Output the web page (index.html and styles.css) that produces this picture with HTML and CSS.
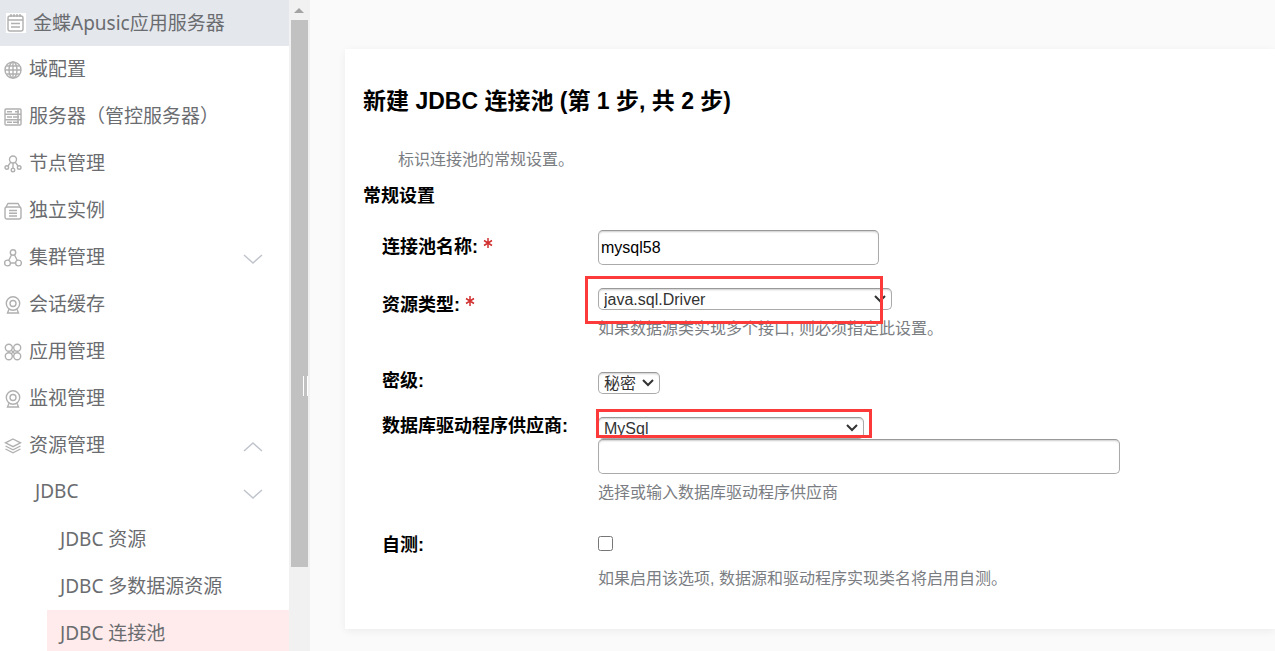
FILE: index.html
```html
<!DOCTYPE html>
<html lang="zh-CN">
<head>
  <meta charset="UTF-8">
  <meta name="viewport" content="width=device-width, initial-scale=1.0">
  <title>新建 JDBC 连接池</title>
  <link rel="stylesheet" href="styles.css">
</head>
<body>
  <aside class="sidebar">
    <nav class="menu">
      <a class="item root" href="#">
        <svg class="icon" viewBox="0 0 20 20"><rect x="2" y="3" width="15" height="15" rx="2"/><path d="M2 7h15M5 1v3M8 1v3M11 1v3M14 1v3M5 10.500h9M5 14h9"/></svg>
        <span>金蝶Apusic应用服务器</span>
      </a>
      <a class="item" href="#">
        <svg class="icon" viewBox="0 0 18 18"><circle cx="9" cy="9" r="8"/><ellipse cx="9" cy="9" rx="4" ry="8"/><path d="M9 1v16M1 9h16M2.500 5h13M2.500 13h13"/></svg>
        <span>域配置</span>
      </a>
      <a class="item" href="#">
        <svg class="icon" viewBox="0 0 18 18"><rect x="1" y="1" width="16" height="16" rx="1"/><path d="M1 6.300h16M1 11.700h16M3 3.700h5M3 9h5M3 14.300h5M11 3.700h4M9 9h6M9 14.300h6M14 2v14"/></svg>
        <span>服务器（管控服务器）</span>
      </a>
      <a class="item" href="#">
        <svg class="icon" viewBox="0 0 18 18"><circle cx="9" cy="4.500" r="3.500"/><circle cx="2.800" cy="12.500" r="1.800"/><circle cx="9" cy="15" r="1.800"/><circle cx="15.200" cy="12.500" r="1.800"/><path d="M9 8v5M6.800 7.200L4 11M11.200 7.200L14 11"/></svg>
        <span>节点管理</span>
      </a>
      <a class="item" href="#">
        <svg class="icon" viewBox="0 0 18 18"><rect x="1" y="5" width="16" height="12" rx="2"/><path d="M2 5l2-3.500h10L16 5M5 8.500h8M5 11.200h8M5 14h8"/></svg>
        <span>独立实例</span>
      </a>
      <a class="item" href="#">
        <svg class="icon" viewBox="0 0 18 18"><circle cx="9" cy="3.500" r="2.700"/><circle cx="3.500" cy="14" r="2.900"/><circle cx="14.500" cy="14" r="2.900"/><path d="M7.500 6L4.800 11.200M10.500 6l2.700 5.200M6.400 14h5.200"/></svg>
        <span>集群管理</span>
        <svg class="arrow" viewBox="0 0 20 12"><path d="M1 2l9 8 9-8"/></svg>
      </a>
      <a class="item" href="#">
        <svg class="icon" viewBox="0 0 18 18"><circle cx="9" cy="7.500" r="6.700"/><circle cx="9" cy="7.500" r="3"/><path d="M5 13.200L3.500 17h11L13 13.200"/></svg>
        <span>会话缓存</span>
      </a>
      <a class="item" href="#">
        <svg class="icon" viewBox="0 0 18 18"><circle cx="4.800" cy="4.800" r="3.500"/><circle cx="13.200" cy="4.800" r="3.500"/><circle cx="4.800" cy="13.200" r="3.500"/><circle cx="13.200" cy="13.200" r="3.500"/><path d="M7 7l4 4M11 7l-4 4"/></svg>
        <span>应用管理</span>
      </a>
      <a class="item" href="#">
        <svg class="icon" viewBox="0 0 18 18"><circle cx="9" cy="7.500" r="6.700"/><circle cx="9" cy="7.500" r="3"/><path d="M5 13.200L3.500 17h11L13 13.200"/></svg>
        <span>监视管理</span>
      </a>
      <a class="item" href="#">
        <svg class="icon" viewBox="0 0 18 18"><path d="M9 2l7.500 3.800L9 9.600 1.500 5.800zM1.500 9L9 12.800 16.500 9M1.500 12L9 15.800 16.500 12"/></svg>
        <span>资源管理</span>
        <svg class="arrow" viewBox="0 0 20 12"><path d="M1 10l9-8 9 8"/></svg>
      </a>
      <a class="item level2" href="#">
        <span>JDBC</span>
        <svg class="arrow" viewBox="0 0 20 12"><path d="M1 2l9 8 9-8"/></svg>
      </a>
      <a class="item level3" href="#"><span>JDBC 资源</span></a>
      <a class="item level3" href="#"><span>JDBC 多数据源资源</span></a>
      <a class="item level3 active" href="#"><span>JDBC 连接池</span></a>
    </nav>
    <div class="scrollbar">
      <svg class="scroll-up" viewBox="0 0 10 6"><path d="M0 6l5-5 5 5z"/></svg>
      <div class="thumb"></div>
      <div class="splitter"></div>
    </div>
  </aside>

  <main>
    <form class="card">
      <h1>新建 JDBC 连接池 (第 1 步, 共 2 步)</h1>
      <p class="intro">标识连接池的常规设置。</p>
      <h2>常规设置</h2>

      <div class="row">
        <label class="required" for="poolName">连接池名称: <svg class="star" viewBox="0 0 10 10"><path d="M5 0v10M1 2.500l8 5M9 2.500l-8 5"/></svg></label>
        <div class="field">
          <input type="text" class="text" id="poolName" value="mysql58">
        </div>
      </div>

      <div class="row">
        <label class="required" for="resType">资源类型: <svg class="star" viewBox="0 0 10 10"><path d="M5 0v10M1 2.500l8 5M9 2.500l-8 5"/></svg></label>
        <div class="field">
          <select class="type" id="resType"><option>java.sql.Driver</option></select>
          <p class="help">如果数据源类实现多个接口, 则必须指定此设置。</p>
          <div class="mark mark-type"></div>
        </div>
      </div>

      <div class="row">
        <label for="secret">密级:</label>
        <div class="field">
          <select class="secret" id="secret"><option>秘密</option></select>
        </div>
      </div>

      <div class="row">
        <label for="vendor">数据库驱动程序供应商:</label>
        <div class="field">
          <select class="vendor" id="vendor"><option>MySql</option></select>
          <input type="text" class="text wide" aria-label="数据库驱动程序供应商">
          <p class="help">选择或输入数据库驱动程序供应商</p>
          <div class="mark mark-vendor"></div>
        </div>
      </div>

      <div class="row">
        <label for="introspect">自测:</label>
        <div class="field">
          <div class="check"><input type="checkbox" id="introspect"></div>
          <p class="help">如果启用该选项, 数据源和驱动程序实现类名将启用自测。</p>
        </div>
      </div>
    </form>
  </main>
</body>
</html>
```
FILE: styles.css
```css
* {
  box-sizing: border-box;
}
body {
  margin: 0;
  display: flex;
  height: 100vh;
  overflow: hidden;
  background: #fafafa;
  font-family: "Liberation Sans", "Noto Sans CJK SC", sans-serif;
}

/* Sidebar */
.sidebar {
  display: flex;
  flex: none;
  width: 310px;
  background: #fff;
}
.menu {
  flex: 1;
  overflow: hidden;
  font-family: "Noto Sans", "Noto Sans CJK SC", sans-serif;
  font-size: 19px;
}
.item {
  display: flex;
  align-items: center;
  height: 47px;
  padding: 0 26px 0 4px;
  color: #6a6c70;
  text-decoration: none;
  white-space: nowrap;
}
.item span {
  margin-left: 7px;
  padding-bottom: 3px;
}
.root {
  height: 46px;
  padding-left: 6px;
  background: #e4e7ec;
}
.root .icon {
  width: 20px;
  height: 20px;
  background: #fff;
}
.icon {
  flex: none;
  width: 18px;
  height: 18px;
  fill: none;
  stroke: #b0b0b0;
  stroke-width: 1.4;
}
.arrow {
  width: 20px;
  height: 12px;
  margin-left: auto;
  margin-top: 3px;
  fill: none;
  stroke: #c0c4cc;
  stroke-width: 1.5;
}
.level2 {
  padding-left: 28px;
}
.level3 {
  padding-left: 6px;
  margin-left: 47px;
}
.active {
  background: #ffebeb;
}
.scrollbar {
  position: relative;
  width: 21px;
  padding: 0 2px;
  background: #f1f1f1;
}
.scroll-up {
  display: block;
  width: 10px;
  height: 20px;
  margin: 0 3px;
  fill: #a3a3a3;
}
.thumb {
  width: 17px;
  height: 84%;
  background: #c1c1c1;
}
.splitter {
  position: absolute;
  top: 376px;
  right: 2px;
  width: 5px;
  height: 20px;
  border: 1px solid #fff;
  border-width: 0 1px 0 1px;
}

/* Content */
main {
  flex: 1;
  min-width: 0;
  padding: 49px 0 0 35px;
}
.card {
  padding: 37px 18px 7px;
  background: #fff;
  box-shadow: 0 2px 8px rgba(0, 0, 0, 0.06);
}
h1, h2, p {
  margin: 0;
}
h1 {
  font-size: 23px;
  line-height: 30px;
}
.intro {
  margin: 32px 0 12px 35px;
}
.intro, .help {
  color: #7a7d82;
  font-size: 16px;
  line-height: 24px;
}
h2 {
  margin-bottom: 22px;
  font-size: 18px;
  line-height: 24px;
}
.row {
  display: flex;
  margin-bottom: 23px;
  padding-left: 19px;
}
.row label {
  flex: none;
  width: 216px;
  font-size: 18px;
  font-weight: bold;
  line-height: 18px;
}
.row .required {
  padding-top: 8px;
}
.star {
  width: 10px;
  height: 10px;
  vertical-align: 5px;
  fill: none;
  stroke: #d23030;
  stroke-width: 1.5;
}
.field {
  position: relative;
  flex: 1;
}
.text, select {
  display: block;
  border: 1px solid #aaa;
  border-top-color: #999;
  border-radius: 5px;
  background: #fff;
  box-shadow: inset 0 2px 2px -1px #ccc;
  color: #000;
  font-family: inherit;
  font-size: 16px;
}
.text {
  width: 281px;
  height: 35px;
  padding: 0 2px;
}
.wide {
  width: 522px;
}
select {
  appearance: none;
  height: 22px;
  padding: 0 20px 0 5px;
  background: #fff url("data:image/svg+xml,%3Csvg xmlns='http://www.w3.org/2000/svg' width='12' height='8' fill='none' stroke='%23333' stroke-width='2'%3E%3Cpath d='M1 1l5 5 5-5'/%3E%3C/svg%3E") no-repeat right 5px center;
  color: #333;
}
.type {
  width: 294px;
}
.secret {
  width: 62px;
}
.vendor {
  width: 266px;
}
.help {
  margin: 7px 0 8px;
}
.check {
  height: 24px;
}
.check input {
  display: block;
  width: 15px;
  height: 15px;
  margin: 0;
}

/* Highlight frames */
.mark {
  position: absolute;
  border: 3px solid #fc3a3a;
  pointer-events: none;
}
.mark-type {
  top: -12px;
  left: -13px;
  width: 298px;
  height: 48px;
}
.mark-vendor {
  top: -8px;
  left: -2px;
  width: 276px;
  height: 29px;
}
```
